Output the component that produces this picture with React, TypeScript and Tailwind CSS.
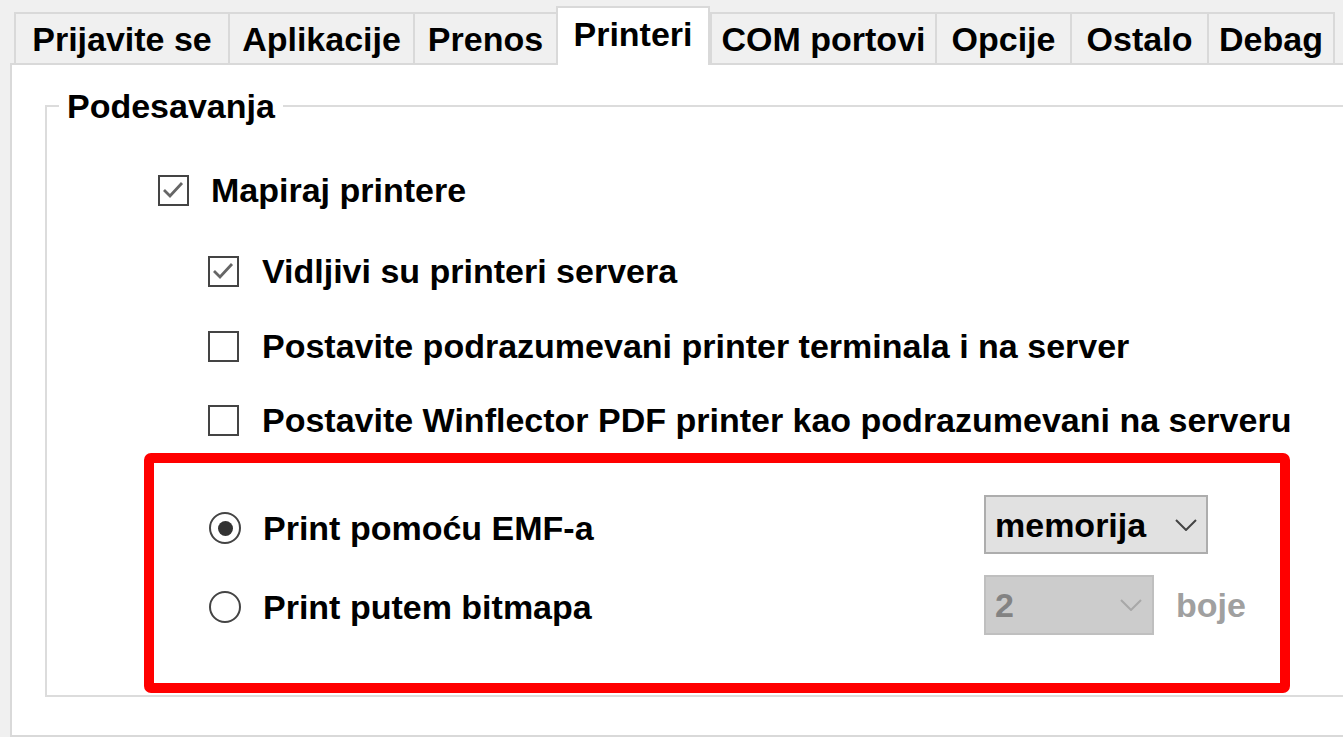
import type { ReactNode } from 'react'

const tabs = [
  { label: 'Prijavite se', w: 'w-[214px]' },
  { label: 'Aplikacije', w: 'w-[185px]' },
  { label: 'Prenos', w: 'w-[143px]' },
  { label: 'Printeri', w: 'w-[154px]', active: true },
  { label: 'COM portovi', w: 'w-[225px]' },
  { label: 'Opcije', w: 'w-[135px]' },
  { label: 'Ostalo', w: 'w-[137px]' },
  { label: 'Debag', w: 'w-[128px]' },
]

function CheckBox({ checked }: { checked?: boolean }) {
  return (
    <span className="w-[31px] h-[31px] shrink-0 border-2 border-[#444] bg-white flex items-center justify-center">
      {checked && (
        <svg width="27" height="27" viewBox="0 0 27 27">
          <polyline points="4,13 10,19 22,6" fill="none" stroke="#666" strokeWidth="2.8" />
        </svg>
      )}
    </span>
  )
}

function CheckRow({ checked, indent, gap, children }: { checked?: boolean; indent: string; gap: string; children: ReactNode }) {
  return (
    <div className={`flex items-center h-[40px] ${indent}`}>
      <CheckBox checked={checked} />
      <span className={gap}>{children}</span>
    </div>
  )
}

function Radio({ checked }: { checked?: boolean }) {
  return (
    <span className="w-[32px] h-[32px] shrink-0 rounded-full border-2 border-[#444] bg-white flex items-center justify-center">
      {checked && <span className="w-[15px] h-[15px] rounded-full bg-[#333]" />}
    </span>
  )
}

function Chevron({ color }: { color: string }) {
  return (
    <svg width="22" height="12" viewBox="0 0 22 12">
      <polyline points="1,1 11,11 21,1" fill="none" stroke={color} strokeWidth="2" />
    </svg>
  )
}

export default function App() {
  return (
    <div className="w-[1343px] h-[737px] overflow-hidden bg-[#f0f0f0] text-black font-['Liberation_Sans',Arial,sans-serif] font-bold text-[34px] leading-none">
      <div className="flex items-end h-[63px] pl-[14px]">
        {tabs.map((t) =>
          t.active ? (
            <div
              key={t.label}
              className={`${t.w} h-[59px] -mb-[2px] relative z-10 bg-white border-2 border-b-0 border-[#d9d9d9] flex items-center justify-center pb-[6px]`}
            >
              {t.label}
            </div>
          ) : (
            <div
              key={t.label}
              className={`${t.w} h-[51px] bg-[#f0f0f0] border-2 border-b-0 border-r-0 border-[#d9d9d9] last:border-r-2 flex items-center justify-center`}
            >
              {t.label}
            </div>
          ),
        )}
      </div>

      <div className="ml-[10px] w-[1400px] h-[674px] bg-white border-2 border-[#d9d9d9]">
        <fieldset className="ml-[33px] mt-[24px] w-[1400px] h-[608px] border-2 border-[#dcdcdc]">
          <legend className="ml-[12px] px-[8px] leading-[34px]">Podesavanja</legend>

          <div className="mt-[47px]">
            <CheckRow checked indent="pl-[111px]" gap="ml-[22px]">
              Mapiraj printere
            </CheckRow>
          </div>
          <div className="mt-[41px]">
            <CheckRow checked indent="pl-[161px]" gap="ml-[23px]">
              Vidljivi su printeri servera
            </CheckRow>
          </div>
          <div className="mt-[35px]">
            <CheckRow indent="pl-[161px]" gap="ml-[23px]">
              Postavite podrazumevani printer terminala i na server
            </CheckRow>
          </div>
          <div className="mt-[34px]">
            <CheckRow indent="pl-[161px]" gap="ml-[23px]">
              Postavite Winflector PDF printer kao podrazumevani na serveru
            </CheckRow>
          </div>

          <div className="mt-[13px] ml-[97px] w-[1146px] h-[240px] border-[10px] border-[#ff0000] rounded-[7px] pt-[32px] pl-[55px]">
            <div className="flex items-center h-[59px]">
              <div className="w-[775px] flex items-center pt-[7px]">
                <Radio checked />
                <span className="ml-[22px]">Print pomoću EMF-a</span>
              </div>
              <div className="w-[224px] h-[59px] bg-[#e1e1e1] border-2 border-[#adadad] flex items-center justify-between pl-[9px] pr-[9px]">
                <span>memorija</span>
                <Chevron color="#444" />
              </div>
            </div>

            <div className="flex items-center h-[60px] mt-[21px]">
              <div className="w-[775px] flex items-center pt-[4px]">
                <Radio />
                <span className="ml-[22px]">Print putem bitmapa</span>
              </div>
              <div className="w-[170px] h-[60px] bg-[#cccccc] border-2 border-[#bfbfbf] flex items-center justify-between pl-[9px] pr-[10px] text-[#838383]">
                <span>2</span>
                <Chevron color="#a8a8a8" />
              </div>
              <span className="ml-[22px] text-[#a0a0a0]">boje</span>
            </div>
          </div>
        </fieldset>
      </div>
    </div>
  )
}
